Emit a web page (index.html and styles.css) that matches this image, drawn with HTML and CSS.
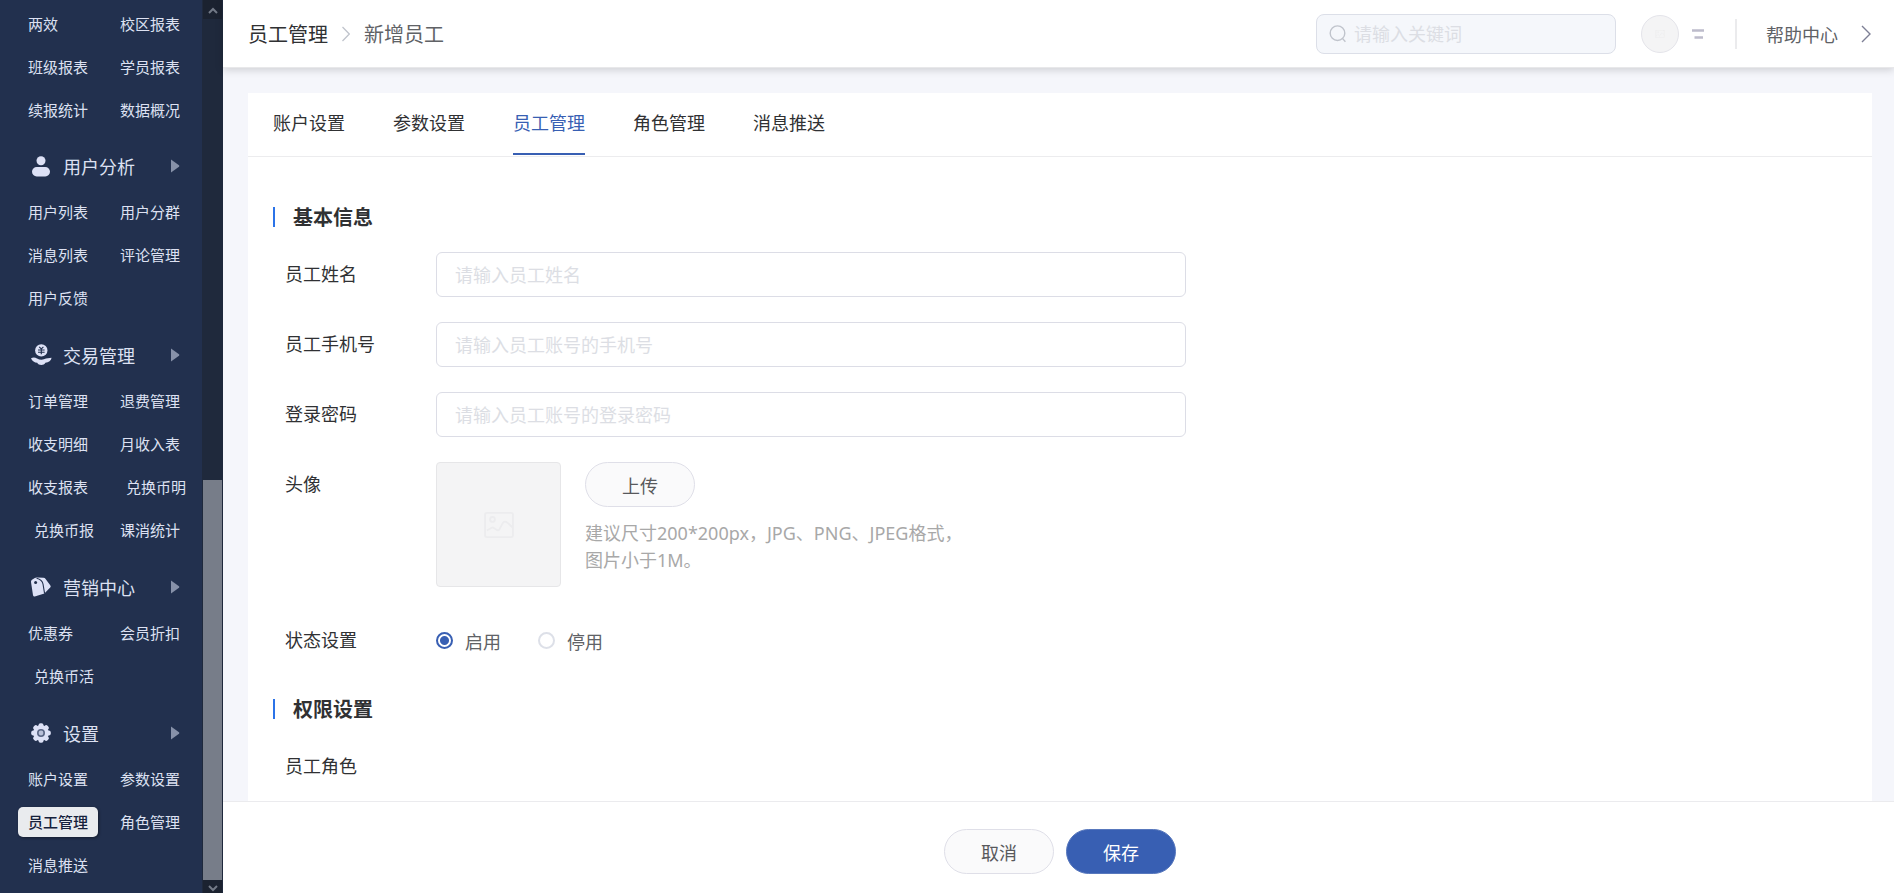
FILE: index.html
```
<!DOCTYPE html>
<html lang="zh-CN">
<head>
<meta charset="utf-8">
<title>新增员工</title>
<link rel="stylesheet" href="styles.css">
</head>
<body>
<div class="app">
  <aside class="sidebar">
    <nav class="menu">
      <div class="menu-items menu-items-first">
        <a href="#">两效</a><a href="#">校区报表</a>
        <a href="#">班级报表</a><a href="#">学员报表</a>
        <a href="#">续报统计</a><a href="#">数据概况</a>
      </div>

      <button type="button" class="menu-head">
        <svg class="menu-icon" viewBox="0 0 20 20"><circle cx="10" cy="4.7" r="4.5"/><rect x="1" y="11" width="18" height="9.4" rx="4.7"/></svg>
        <span>用户分析</span>
        <svg class="menu-caret" viewBox="0 0 10 14"><path d="M1 0.5 9 6.2Q9.8 7 9 7.8L1 13.5Z"/></svg>
      </button>
      <div class="menu-items">
        <a href="#">用户列表</a><a href="#">用户分群</a>
        <a href="#">消息列表</a><a href="#">评论管理</a>
        <a href="#">用户反馈</a>
      </div>

      <button type="button" class="menu-head">
        <svg class="menu-icon" viewBox="0 0 20 20"><circle cx="10.3" cy="5.4" r="6.2"/><path d="M0 13.2C2 12 4.2 12.2 6 13.4 8.6 15 12.2 15 15 13.6L20.600 12.800C20.200 15.600 17.600 17.400 14.400 17.800 13 20.800 7.600 20.800 6.200 17.800 3.600 17.400 1.200 16.400 0 13.200Z"/><path class="cut" d="M8.200 1.900 10.300 4 12.400 1.900M10.300 4V9.200M7 5H13.600M7 7.200H13.600"/></svg>
        <span>交易管理</span>
        <svg class="menu-caret" viewBox="0 0 10 14"><path d="M1 0.5 9 6.2Q9.8 7 9 7.8L1 13.5Z"/></svg>
      </button>
      <div class="menu-items">
        <a href="#">订单管理</a><a href="#">退费管理</a>
        <a href="#">收支明细</a><a href="#">月收入表</a>
        <a href="#">收支报表</a><a href="#" class="indent">兑换币明</a>
        <a href="#" class="indent">兑换币报</a><a href="#">课消统计</a>
      </div>

      <button type="button" class="menu-head">
        <svg class="menu-icon" viewBox="0 0 20 20"><path d="M0 5Q-0.200 3.600 1 2.800L3.800 1Q5 0.400 6.400 0.600L12.500 0.800Q13.800 0.900 14.600 2L19.400 8.400Q20.200 9.600 19.200 10.600L13.400 16.400 3.800 19.400Q2.400 19.600 2 18.200Z"/><circle class="hole" cx="4.600" cy="5.400" r="1.500"/><path class="cut" d="M5.600 1.200C9.200 2 11.400 3.800 12 7L13.600 16.600"/></svg>
        <span>营销中心</span>
        <svg class="menu-caret" viewBox="0 0 10 14"><path d="M1 0.5 9 6.2Q9.8 7 9 7.8L1 13.5Z"/></svg>
      </button>
      <div class="menu-items">
        <a href="#">优惠券</a><a href="#">会员折扣</a>
        <a href="#" class="indent">兑换币活</a>
      </div>

      <button type="button" class="menu-head">
        <svg class="menu-icon" viewBox="0 0 20 20"><g><circle cx="10" cy="10" r="7.8"/><rect x="7.5" y="0.2" width="5" height="19.6" rx="2"/><rect x="7.5" y="0.2" width="5" height="19.6" rx="2" transform="rotate(45 10 10)"/><rect x="7.5" y="0.2" width="5" height="19.6" rx="2" transform="rotate(90 10 10)"/><rect x="7.5" y="0.2" width="5" height="19.6" rx="2" transform="rotate(135 10 10)"/></g><circle class="ring" cx="10" cy="10" r="3.2"/></svg>
        <span>设置</span>
        <svg class="menu-caret" viewBox="0 0 10 14"><path d="M1 0.5 9 6.2Q9.8 7 9 7.8L1 13.5Z"/></svg>
      </button>
      <div class="menu-items">
        <a href="#">账户设置</a><a href="#">参数设置</a>
        <a href="#" class="active" aria-current="page">员工管理</a><a href="#">角色管理</a>
        <a href="#">消息推送</a>
      </div>
    </nav>
    <div class="scrollbar" aria-hidden="true">
      <div class="scroll-btn"><svg viewBox="0 0 10 8"><path d="M1 7 5 3 9 7"/></svg></div>
      <div class="scroll-space"></div>
      <div class="scroll-thumb"></div>
      <div class="scroll-btn scroll-btn-down"><svg viewBox="0 0 10 8"><path d="M1 1 5 5 9 1"/></svg></div>
    </div>
  </aside>

  <div class="main">
    <header class="topbar">
      <nav class="crumbs">
        <a href="#">员工管理</a>
        <svg viewBox="0 0 8 16"><path d="M0.5 1 7.3 8 0.5 15"/></svg>
        <span>新增员工</span>
      </nav>
      <label class="search">
        <svg viewBox="0 0 18 18"><ellipse cx="8.5" cy="8.2" rx="7.3" ry="7.3"/><path d="M13.4 13.4 16.4 16.8"/></svg>
        <input type="search" placeholder="请输入关键词" aria-label="搜索">
      </label>
      <div class="avatar-sm"><svg viewBox="0 0 32 28"><rect x="1" y="1" width="30" height="26" rx="2"/><circle cx="9" cy="8" r="2.6"/><path d="M3 20 8 17Q9.5 16.300 11 17.600L14 19.600Q15.500 20 16.500 18.500L20 12Q22 9 25 11.500L31 17"/></svg></div>
      <button type="button" class="more" aria-label="菜单"><svg viewBox="0 0 14 10"><path d="M1 1.500H13M3.500 8.500H12"/></svg></button>
      <a href="#" class="help">
        <span>帮助中心</span>
        <svg viewBox="0 0 10 18"><path d="M1 1 9 9 1 17"/></svg>
      </a>
    </header>

    <div class="content">
      <section class="card">
        <nav class="tabs">
          <a href="#">账户设置</a>
          <a href="#">参数设置</a>
          <a href="#" class="active" aria-current="page">员工管理</a>
          <a href="#">角色管理</a>
          <a href="#">消息推送</a>
        </nav>
        <form class="form" id="staff">
          <h2 class="section-title">基本信息</h2>
          <div class="row">
            <label class="row-label" for="name">员工姓名</label>
            <input class="field" id="name" type="text" placeholder="请输入员工姓名">
          </div>
          <div class="row">
            <label class="row-label" for="phone">员工手机号</label>
            <input class="field" id="phone" type="tel" placeholder="请输入员工账号的手机号">
          </div>
          <div class="row">
            <label class="row-label" for="pwd">登录密码</label>
            <input class="field" id="pwd" type="password" placeholder="请输入员工账号的登录密码">
          </div>
          <div class="row">
            <span class="row-label">头像</span>
            <div class="preview"><svg viewBox="0 0 32 28"><rect x="1" y="1" width="30" height="26" rx="2"/><circle cx="9" cy="8" r="2.6"/><path d="M3 20 8 17Q9.500 16.300 11 17.600L14 19.600Q15.500 20 16.500 18.500L20 12Q22 9 25 11.500L31 17"/></svg></div>
            <div class="upload">
              <button type="button" class="btn">上传</button>
              <p>建议尺寸200*200px，JPG、PNG、JPEG格式，<br>图片小于1M。</p>
            </div>
          </div>
          <div class="row row-status" role="radiogroup" aria-label="状态设置">
            <span class="row-label">状态设置</span>
            <label class="radio"><input type="radio" name="status" checked>启用</label>
            <label class="radio"><input type="radio" name="status">停用</label>
          </div>
          <h2 class="section-title">权限设置</h2>
          <div class="row">
            <span class="row-label">员工角色</span>
          </div>
        </form>
      </section>
    </div>

    <footer class="actions">
      <button type="button" class="btn">取消</button>
      <button type="submit" form="staff" class="btn btn-primary">保存</button>
    </footer>
  </div>
</div>
</body>
</html>
```
FILE: styles.css
```
* {
  box-sizing: border-box;
}

body {
  margin: 0;
  font-family: "Noto Sans", "Noto Sans CJK SC", sans-serif;
  font-size: 18px;
  color: #303133;
}

a {
  color: inherit;
  text-decoration: none;
}

button,
input {
  font: inherit;
}

svg {
  display: block;
  flex: none;
}

.app {
  display: flex;
  height: 100vh;
  overflow: hidden;
}

/* Sidebar */
.sidebar {
  display: flex;
  flex: none;
  width: 223px;
  background: #22304e;
  color: #dde1f2;
}

.menu {
  flex: 1;
  overflow: hidden;
}

.menu-items {
  display: grid;
  grid-template-columns: 80px 80px;
  grid-auto-rows: 30px;
  gap: 13px 12px;
  padding: 7px 0 18px 18px;
  font-size: 15px;
  line-height: 30px;
}

.menu-items-first {
  padding-top: 9px;
  padding-bottom: 17px;
}

.menu-items a {
  padding-left: 10px;
  border-radius: 5px;
  white-space: nowrap;
}

.menu-items .indent {
  padding-left: 16px;
}

.menu-items .active {
  background: #e9ebee;
  color: #16213c;
  font-weight: 500;
  box-shadow: 1px 1px 3px rgba(0, 0, 0, 0.4);
}

.menu-head {
  display: flex;
  align-items: center;
  width: 100%;
  height: 48px;
  padding: 0 22px 0 31px;
  border: 0;
  background: none;
  color: inherit;
  text-align: left;
}

.menu-head span {
  flex: 1;
  padding-left: 12px;
}

.menu-icon {
  width: 20px;
  height: 20px;
  fill: #dde1f6;
  overflow: visible;
}

.menu-icon .cut {
  fill: none;
  stroke: #22304e;
  stroke-width: 1.1;
}

.menu-icon .hole {
  fill: #22304e;
}

.menu-icon .ring {
  fill: #b9c0d8;
  stroke: #5a6685;
  stroke-width: 1.6;
}

.menu-caret {
  width: 10px;
  height: 14px;
  fill: #8791a9;
}

.scrollbar {
  display: flex;
  flex-direction: column;
  width: 21px;
  padding: 0 1px;
  background: #1f293c;
}

.scroll-btn {
  display: flex;
  align-items: center;
  justify-content: center;
  height: 19px;
  background: #1b2230;
}

.scroll-btn-down {
  height: 13px;
  padding-top: 4px;
}

.scroll-btn svg {
  width: 10px;
  height: 8px;
  fill: none;
  stroke: #737a87;
  stroke-width: 2;
}

.scroll-space {
  flex: 461;
}

.scroll-thumb {
  flex: 400;
  background: #777d89;
}

/* Top bar */
.main {
  display: flex;
  flex: 1;
  flex-direction: column;
  min-width: 0;
}

.topbar {
  display: flex;
  flex: none;
  align-items: center;
  height: 68px;
  padding: 0 23px 0 25px;
  border-bottom: 1px solid #e8e8ea;
  background: #fff;
  box-shadow: 0 2px 8px rgba(0, 0, 0, 0.16);
  z-index: 1;
}

.crumbs {
  display: flex;
  flex: 1;
  align-items: center;
  gap: 14px;
  font-size: 20px;
}

.crumbs svg {
  width: 8px;
  height: 16px;
  fill: none;
  stroke: #c0c4cc;
  stroke-width: 1.3;
}

.crumbs span {
  color: #606266;
}

.search {
  display: flex;
  align-items: center;
  gap: 7px;
  width: 300px;
  height: 40px;
  padding: 0 12px;
  border: 1px solid #dcdfe8;
  border-radius: 8px;
  background: #f5f7fb;
}

.search svg {
  width: 18px;
  height: 18px;
  fill: none;
  stroke: #c0c4cc;
  stroke-width: 1.4;
}

.search input {
  flex: 1;
  min-width: 0;
  padding: 0;
  border: 0;
  outline: 0;
  background: none;
}

input::placeholder {
  color: #dcdee4;
  opacity: 1;
}

.avatar-sm {
  display: flex;
  align-items: center;
  justify-content: center;
  width: 38px;
  height: 38px;
  margin-left: 25px;
  border: 1px solid #e4e4ea;
  border-radius: 50%;
  background: #f4f4f5;
}

.avatar-sm svg {
  width: 10px;
  height: 8px;
  fill: none;
  stroke: #ececee;
  stroke-width: 2;
}

.more {
  margin-left: 12px;
  padding: 0;
  border: 0;
  background: none;
}

.more svg {
  width: 14px;
  height: 10px;
  fill: none;
  stroke: #bdbccb;
  stroke-width: 2.4;
}

.help {
  display: flex;
  align-items: center;
  gap: 23px;
  height: 30px;
  margin-left: 30px;
  padding-left: 29px;
  border-left: 2px solid #ebebed;
  color: #606266;
}

.help svg {
  width: 10px;
  height: 18px;
  fill: none;
  stroke: #7d7f95;
  stroke-width: 1.4;
}

/* Content */
.content {
  flex: 1;
  min-height: 0;
  padding: 25px 22px 0 25px;
  overflow: hidden;
  background: #f5f6fb;
}

.card {
  min-height: 100%;
  background: #fff;
}

.tabs {
  display: flex;
  gap: 48px;
  height: 64px;
  padding: 0 25px;
  border-bottom: 1px solid #ececee;
  line-height: 60px;
}

.tabs a {
  height: 62px;
}

.tabs .active {
  border-bottom: 2px solid #385fb3;
  color: #385fb3;
}

.form {
  padding: 50px 25px 25px;
}

.section-title {
  margin: 0 0 25px;
  padding: 2px 0 0 18px;
  border-left: 2px solid #2b73e8;
  font-size: 20px;
  font-weight: 700;
  line-height: 18px;
}

.row {
  display: flex;
  margin-bottom: 25px;
  padding-left: 12px;
}

.row-label {
  flex: none;
  width: 151px;
  line-height: 45px;
}

.field {
  flex: 0 1 750px;
  min-width: 0;
  height: 45px;
  padding: 0 18px;
  border: 1px solid #dcdde6;
  border-radius: 6px;
  background: #fff;
}

.preview {
  display: flex;
  align-items: center;
  justify-content: center;
  width: 125px;
  height: 125px;
  border: 1px solid #e6e6e8;
  border-radius: 4px;
  background: #f4f4f5;
}

.preview svg {
  width: 32px;
  height: 26px;
  fill: none;
  stroke: #ececee;
  stroke-width: 2;
}

.upload {
  padding-left: 24px;
}

.upload p {
  margin: 13px 0 0;
  color: #a8a8a8;
  line-height: 27px;
}

.btn {
  width: 110px;
  height: 45px;
  padding: 0;
  border: 1px solid #dfdfe8;
  border-radius: 23px;
  background: #fafafb;
  color: #58595c;
}

.btn-primary {
  border-color: #5878bd;
  background: #385fb3;
  color: #fff;
}

.row-status {
  margin: 31px 0 36px;
}

.radio {
  display: flex;
  align-items: center;
  margin-right: 37px;
  color: #606266;
}

.radio input {
  appearance: none;
  width: 17px;
  height: 17px;
  margin: 0 12px 0 0;
  border: 2px solid #dde0e8;
  border-radius: 50%;
  background: #fff;
}

.radio input:checked {
  border-color: #385fb3;
  background: radial-gradient(circle, #385fb3 4px, #fff 5px);
}

/* Footer */
.actions {
  display: flex;
  flex: none;
  justify-content: center;
  gap: 12px;
  padding: 27px 0 19px 3px;
  border-top: 1px solid #ebebee;
  background: #fff;
}
```
